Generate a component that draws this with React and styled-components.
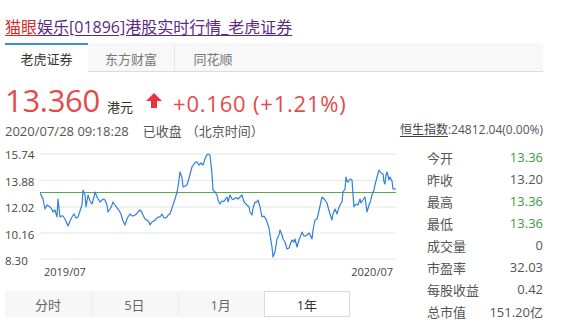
import React from "react";
import styled, { createGlobalStyle } from "styled-components";

const Global = createGlobalStyle`
  html, body { margin: 0; padding: 0; background: #fff; }
  body { font-family: "Open Sans", "Noto Sans CJK SC", sans-serif; color: #333; }
`;

const Page = styled.div`
  width: 538px;
  padding: 17px 0 0 5px;
`;

const Title = styled.div`
  font-size: 16px;
  line-height: 20px;
  height: 20px;
  white-space: nowrap;
`;

const TitlePart = styled.span`
  color: ${(p) => p.$color};
  text-decoration: underline;
  text-decoration-color: ${(p) => p.$color};
  text-underline-offset: 2px;
`;

const TabBar = styled.div`
  margin-top: 6px;
  display: flex;
  height: 28px;
  background: #f8f8f8;
  border-bottom: 1px solid #dcdcdc;
`;

const Tab = styled.div`
  width: ${(p) => p.$w}px;
  box-sizing: border-box;
  display: flex;
  align-items: center;
  justify-content: center;
  font-size: 13px;
  color: ${(p) => (p.$active ? "#333" : "#777")};
  background: ${(p) => (p.$active ? "#fff" : "transparent")};
  border-top: 2px solid ${(p) => (p.$active ? "#3a8ede" : "transparent")};
  border-right: ${(p) => (p.$sep ? "1px solid #e6e6e6" : "none")};
  margin-bottom: ${(p) => (p.$active ? "-1px" : "0")};
  height: ${(p) => (p.$active ? "29px" : "28px")};
`;

const PriceRow = styled.div`
  margin-top: 8px;
  display: flex;
  align-items: baseline;
  height: 40px;
  line-height: 40px;
  color: #e24c4c;
`;

const Price = styled.span`
  font-size: 31px;
  letter-spacing: -0.3px;
`;

const Unit = styled.span`
  font-size: 13px;
  color: #333;
  margin-left: 7px;
`;

const Arrow = styled.svg`
  width: 16px;
  height: 15px;
  margin: 0 11px 0 13px;
  align-self: center;
`;

const Change = styled.span`
  font-size: 22px;
  letter-spacing: 0.8px;
`;

const InfoRow = styled.div`
  display: flex;
  justify-content: space-between;
  align-items: center;
  height: 18px;
  line-height: 18px;
  margin-top: 1px;
  color: #555;
  white-space: nowrap;
`;

const DateText = styled.span`
  font-size: 13px;
`;

const Status = styled.span`
  font-size: 13px;
  margin-left: ${(p) => p.$ml}px;
`;

const Index = styled.span`
  font-size: 12px;
  color: #555;
`;

const IndexName = styled.span`
  text-decoration: underline;
  text-underline-offset: 2px;
  color: #444;
`;

const Main = styled.div`
  margin-top: 7px;
  display: flex;
  align-items: flex-start;
`;

const LeftCol = styled.div`
  width: 391px;
  display: flex;
  flex-direction: column;
`;

const ChartRow = styled.div`
  margin-top: 2px;
  display: flex;
  align-items: flex-start;
`;

const YAxis = styled.div`
  width: 35px;
  height: 120px;
  display: flex;
  flex-direction: column;
  justify-content: space-between;
`;

const YLabel = styled.div`
  font-size: 11.5px;
  line-height: 14px;
  height: 14px;
  color: #444;
`;

const Plot = styled.div`
  width: 356px;
  display: flex;
  flex-direction: column;
`;

const PlotSvg = styled.svg`
  display: block;
  width: 356px;
  height: 113px;
`;

const XLabels = styled.div`
  margin-top: 5px;
  display: flex;
  justify-content: space-between;
  padding: 0 3px 0 4px;
  font-size: 11px;
  line-height: 12px;
  color: #444;
`;

const RangeTabs = styled.div`
  margin-top: 13px;
  width: 345px;
  display: grid;
  grid-template-columns: repeat(4, 1fr);
  height: 26px;
  background: #f7f7f7;
`;

const RangeTab = styled.div`
  display: flex;
  align-items: center;
  justify-content: center;
  box-sizing: border-box;
  font-size: 13px;
  color: ${(p) => (p.$active ? "#333" : "#666")};
  background: ${(p) => (p.$active ? "#fff" : "transparent")};
  border: 1px solid ${(p) => (p.$active ? "#dadada" : "transparent")};
  border-left: 1px solid ${(p) => (p.$active ? "#dadada" : p.$first ? "transparent" : "#ececec")};
`;

const Stats = styled.div`
  margin-left: 31px;
  width: 116px;
  display: flex;
  flex-direction: column;
`;

const StatRow = styled.div`
  display: flex;
  justify-content: space-between;
  align-items: center;
  height: 22px;
  font-size: 13px;
`;

const StatLabel = styled.span`
  color: #555;
`;

const StatValue = styled.span`
  color: ${(p) => (p.$green ? "#3a9c3a" : "#555")};
`;

const keyPts = [
  [40, 191], [43, 197], [45, 207], [47, 203], [50, 205], [53, 210], [55, 208], [57, 215],
  [58, 197], [60, 215], [63, 214], [65, 217], [68, 224], [70, 219], [72, 215], [74, 212],
  [76, 216], [78, 215], [80, 209], [82, 203], [83, 188], [85, 193], [86, 205], [88, 193],
  [90, 199], [92, 202], [94, 195], [95, 190], [97, 195], [100, 200], [102, 198], [105, 198],
  [107, 203], [108, 210], [110, 207], [113, 200], [115, 203], [118, 207], [121, 212], [123, 219],
  [125, 223], [127, 217], [130, 212], [133, 214], [135, 213], [138, 210], [140, 208], [143, 213],
  [145, 217], [147, 218], [149, 220], [150, 223], [152, 220], [155, 218], [157, 216], [160, 215],
  [162, 212], [164, 216], [167, 215], [170, 212], [172, 206], [175, 197], [177, 190], [178, 185],
  [180, 170], [182, 176], [183, 185], [185, 184], [187, 183], [189, 176], [192, 165], [194, 162],
  [197, 160], [199, 163], [201, 161], [203, 163], [205, 157], [208, 152], [210, 153], [212, 172],
  [213, 188], [215, 190], [217, 193], [218, 198], [220, 202], [222, 199], [225, 198], [227, 195],
  [228, 200], [230, 193], [232, 197], [235, 196], [238, 197], [240, 195], [242, 193], [244, 200],
  [247, 203], [249, 205], [250, 210], [252, 213], [253, 206], [255, 200], [258, 198], [260, 205],
  [262, 215], [264, 214], [267, 220], [269, 226], [270, 233], [272, 245], [273, 255], [275, 250],
  [277, 237], [279, 233], [280, 228], [282, 233], [283, 237], [285, 240], [287, 247], [289, 246],
  [292, 238], [294, 240], [295, 237], [297, 245], [299, 238], [302, 230], [304, 234], [307, 233],
  [309, 231], [312, 237], [313, 228], [315, 218], [317, 217], [318, 213], [320, 204], [322, 195],
  [324, 197], [325, 198], [327, 201], [328, 205], [330, 212], [332, 218], [333, 212], [335, 207],
  [337, 212], [340, 203], [342, 200], [343, 190], [345, 187], [346, 175], [347, 179], [348, 180],
  [350, 177], [352, 178], [353, 192], [354, 205], [356, 202], [358, 203], [360, 197], [361, 201],
  [363, 198], [365, 195], [367, 210], [369, 203], [372, 193], [374, 188], [375, 183], [377, 175],
  [379, 168], [381, 171], [383, 172], [384, 180], [385, 182], [386, 173], [387, 170], [389, 178],
  [390, 175], [392, 179], [393, 187], [396, 187],
];

function buildLine() {
  const out = [];
  let seed = 7;
  const rnd = () => {
    seed = (seed * 9301 + 49297) % 233280;
    return seed / 233280 - 0.5;
  };
  for (let i = 0; i < keyPts.length - 1; i++) {
    const [x0, y0] = keyPts[i];
    const [x1, y1] = keyPts[i + 1];
    out.push([x0, y0]);
    const steps = Math.max(0, Math.floor((x1 - x0) / 1.2) - 1);
    for (let s = 1; s <= steps; s++) {
      const t = s / (steps + 1);
      out.push([x0 + (x1 - x0) * t, y0 + (y1 - y0) * t + rnd() * 2.4]);
    }
  }
  out.push(keyPts[keyPts.length - 1]);
  return out.map(([x, y]) => `${x.toFixed(1)},${y.toFixed(1)}`).join(" ");
}

const linePoints = buildLine();
const gridYs = [152, 178.5, 205, 231, 257];

const stats = [
  ["今开", "13.36", true],
  ["昨收", "13.20", false],
  ["最高", "13.36", true],
  ["最低", "13.36", true],
  ["成交量", "0", false],
  ["市盈率", "32.03", false],
  ["每股收益", "0.42", false],
  ["总市值", "151.20亿", false],
];

export default function App() {
  return (
    <>
      <Global />
      <Page>
        <Title>
          <TitlePart $color="#d42a2a">猫眼</TitlePart>
          <TitlePart $color="#5b2a86">娱乐[01896]港股实时行情_老虎证券</TitlePart>
        </Title>
        <TabBar>
          <Tab $w={83} $active>老虎证券</Tab>
          <Tab $w={87} $sep>东方财富</Tab>
          <Tab $w={76}>同花顺</Tab>
        </TabBar>
        <PriceRow>
          <Price>13.360</Price>
          <Unit>港元</Unit>
          <Arrow viewBox="0 0 16 15">
            <path d="M8 0 L16 8 L11 8 L11 15 L5 15 L5 8 L0 8 Z" fill="#e8333f" />
          </Arrow>
          <Change>+0.160 (+1.21%)</Change>
        </PriceRow>
        <InfoRow>
          <span>
            <DateText>2020/07/28 09:18:28</DateText>
            <Status $ml={14}>已收盘</Status>
            <Status $ml={4}>（北京时间）</Status>
          </span>
          <Index>
            <IndexName>恒生指数</IndexName>:24812.04(0.00%)
          </Index>
        </InfoRow>
        <Main>
          <LeftCol>
            <ChartRow>
              <YAxis>
                <YLabel>15.74</YLabel>
                <YLabel>13.88</YLabel>
                <YLabel>12.02</YLabel>
                <YLabel>10.16</YLabel>
                <YLabel>8.30</YLabel>
              </YAxis>
              <Plot>
                <PlotSvg viewBox="40 146 356 113">
                  {gridYs.map((y) => (
                    <line key={y} x1="40" x2="396" y1={y} y2={y} stroke="#e6e6e6" strokeWidth="1" />
                  ))}
                  <line x1="40" x2="396" y1="190.5" y2="190.5" stroke="#5aa84a" strokeWidth="1" />
                  <polyline points={linePoints} fill="none" stroke="#2f7fdc" strokeWidth="1.2" strokeLinejoin="round" />
                </PlotSvg>
                <XLabels>
                  <span>2019/07</span>
                  <span>2020/07</span>
                </XLabels>
              </Plot>
            </ChartRow>
            <RangeTabs>
              <RangeTab $first>分时</RangeTab>
              <RangeTab>5日</RangeTab>
              <RangeTab>1月</RangeTab>
              <RangeTab $active>1年</RangeTab>
            </RangeTabs>
          </LeftCol>
          <Stats>
            {stats.map(([k, v, g]) => (
              <StatRow key={k}>
                <StatLabel>{k}</StatLabel>
                <StatValue $green={g}>{v}</StatValue>
              </StatRow>
            ))}
          </Stats>
        </Main>
      </Page>
    </>
  );
}
